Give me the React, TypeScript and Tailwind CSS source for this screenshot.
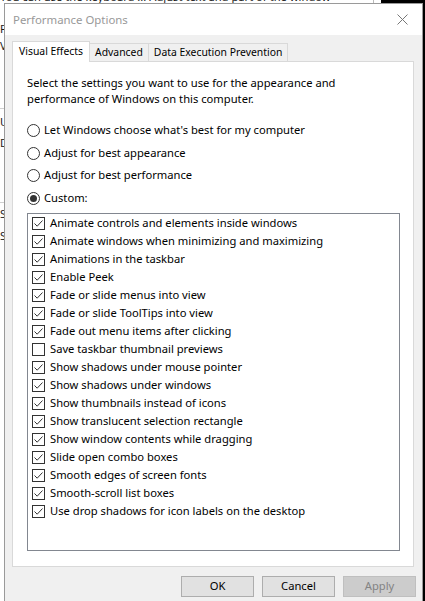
const font = { fontFamily: '"Noto Sans", "Liberation Sans", sans-serif' };

const options = [
  { label: 'Animate controls and elements inside windows', on: true },
  { label: 'Animate windows when minimizing and maximizing', on: true },
  { label: 'Animations in the taskbar', on: true },
  { label: 'Enable Peek', on: true },
  { label: 'Fade or slide menus into view', on: true },
  { label: 'Fade or slide ToolTips into view', on: true },
  { label: 'Fade out menu items after clicking', on: true },
  { label: 'Save taskbar thumbnail previews', on: false },
  { label: 'Show shadows under mouse pointer', on: true },
  { label: 'Show shadows under windows', on: true },
  { label: 'Show thumbnails instead of icons', on: true },
  { label: 'Show translucent selection rectangle', on: true },
  { label: 'Show window contents while dragging', on: true },
  { label: 'Slide open combo boxes', on: true },
  { label: 'Smooth edges of screen fonts', on: true },
  { label: 'Smooth-scroll list boxes', on: true },
  { label: 'Use drop shadows for icon labels on the desktop', on: true },
];

const radios = [
  { label: "Let Windows choose what's best for my computer", on: false },
  { label: 'Adjust for best appearance', on: false },
  { label: 'Adjust for best performance', on: false },
  { label: 'Custom:', on: true },
];

function Radio({ on }: { on: boolean }) {
  return (
    <span className="w-[13px] h-[13px] rounded-full border border-[#333] bg-white flex items-center justify-center shrink-0">
      {on && <span className="w-[7px] h-[7px] rounded-full bg-[#333]" />}
    </span>
  );
}

function Check({ on }: { on: boolean }) {
  return (
    <span className="w-[13px] h-[13px] border border-[#333] bg-white flex items-center justify-center shrink-0">
      {on && (
        <svg width="11" height="11" viewBox="0 0 11 11">
          <path d="M1.5 5.5 L4.2 8.2 L9.5 2.5" fill="none" stroke="#333" strokeWidth="1" />
        </svg>
      )}
    </span>
  );
}

function Tab({ label, active }: { label: string; active?: boolean }) {
  return active ? (
    <div className="h-[21px] px-[6px] bg-white border border-b-0 border-[#d9d9d9] flex items-center -mb-px relative z-10">
      {label}
    </div>
  ) : (
    <div className="h-[18px] px-[5px] bg-[#f0f0f0] border border-l-0 border-b-0 border-[#d9d9d9] flex items-center">
      {label}
    </div>
  );
}

function Btn({ label, disabled }: { label: string; disabled?: boolean }) {
  return (
    <button
      className={
        disabled
          ? 'w-[73px] h-[21px] bg-[#cccccc] border border-[#bfbfbf] text-[#838383]'
          : 'w-[73px] h-[21px] bg-[#e1e1e1] border border-[#adadad] text-black'
      }
    >
      {label}
    </button>
  );
}

export default function App() {
  return (
    <div className="relative w-[425px] h-[601px] overflow-hidden bg-black text-[11.2px] text-black" style={font}>
      {/* window behind the dialog */}
      <div className="absolute left-0 top-0 w-[381px] h-[601px] bg-white text-[#1a1a1a]">
        <div className="absolute -top-[11px] left-0 whitespace-nowrap">You can use the keyboard ... Adjust text and part of the window</div>
        <div className="absolute top-[21px] left-0">F</div>
        <div className="absolute top-[38px] left-0">V</div>
        <div className="absolute top-[108px] left-0 w-full border-t border-[#d0d0d0]" />
        <div className="absolute top-[114px] left-0">U</div>
        <div className="absolute top-[135px] left-0">D</div>
        <div className="absolute top-[202px] left-0 w-full border-t border-[#d0d0d0]" />
        <div className="absolute top-[206px] left-0">S</div>
        <div className="absolute top-[228px] left-0">S</div>
        <div className="absolute top-0 left-[373px] w-px h-[3px] bg-[#bbb]" />
      </div>

      {/* dialog */}
      <div className="absolute left-[4px] top-[3px] w-[419px] h-[600px] border border-[#9a9a9a] bg-[#f0f0f0] flex flex-col">
        <div className="h-[31px] bg-white flex items-center justify-between pl-[8px] pr-[14px] shrink-0">
          <span className="text-[#999] text-[11.4px]">Performance Options</span>
          <svg width="11" height="11" viewBox="0 0 11 11">
            <path d="M0.5 0.5 L10.5 10.5 M10.5 0.5 L0.5 10.5" stroke="#777" strokeWidth="1" />
          </svg>
        </div>

        <div className="pt-[6px] pl-[7px] flex flex-col">
          <div className="flex items-end text-[10.4px]">
            <Tab label="Visual Effects" active />
            <Tab label="Advanced" />
            <Tab label="Data Execution Prevention" />
          </div>

          <div className="w-[402px] h-[506px] bg-white border border-[#d9d9d9] pl-[14px] pt-[13px] flex flex-col">
            <p className="leading-[16px]">
              Select the settings you want to use for the appearance and
              <br />
              performance of Windows on this computer.
            </p>

            <div className="mt-[17px] flex flex-col gap-[9.5px]">
              {radios.map((r) => (
                <label key={r.label} className="flex items-center gap-[4px] h-[13px]">
                  <Radio on={r.on} />
                  <span>{r.label}</span>
                </label>
              ))}
            </div>

            <div className="mt-[8px] w-[373px] h-[338px] border border-[#828790] bg-white pl-[4px] pt-[1px] flex flex-col">
              {options.map((o) => (
                <label key={o.label} className="h-[18px] flex items-center gap-[5px]">
                  <Check on={o.on} />
                  <span>{o.label}</span>
                </label>
              ))}
            </div>
          </div>

          <div className="flex justify-end gap-[8px] pr-[6px] pt-[9px]">
            <Btn label="OK" />
            <Btn label="Cancel" />
            <Btn label="Apply" disabled />
          </div>
        </div>
      </div>
    </div>
  );
}
